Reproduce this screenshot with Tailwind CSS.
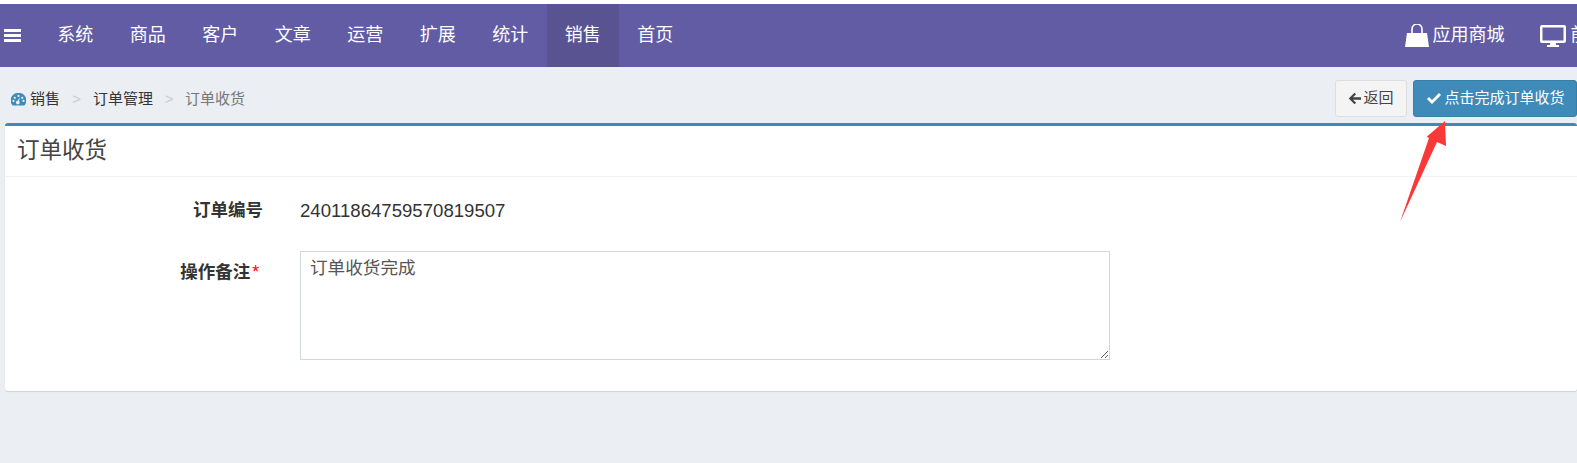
<!DOCTYPE html>
<html lang="zh-CN">
<head>
    <meta charset="UTF-8">
    <title>订单收货</title>
    <script src="https://cdn.jsdelivr.net/npm/@tailwindcss/browser@4"></script>
</head>
<body class="relative w-[1577px] h-[463px] overflow-hidden bg-[#ebeef3] pt-[4px] font-['Liberation_Sans','Noto_Sans_CJK_SC',sans-serif] text-[#333]">
    <div class="absolute top-0 left-0 w-full h-[4px] bg-white"></div>

    <!-- Top nav -->
    <nav class="flex items-center h-[63px] w-[1660px] bg-[#625ca5] text-white text-[18px]">
        <div class="w-[39px] pl-[4px]">
            <svg class="w-[17px] h-[14px]" viewBox="0 0 17 14" fill="#fff"><rect y="0" width="17" height="3"/><rect y="5" width="17" height="3"/><rect y="10" width="17" height="3"/></svg>
        </div>
        <a class="flex items-center justify-center w-[72.5px] h-full">系统</a>
        <a class="flex items-center justify-center w-[72.5px] h-full">商品</a>
        <a class="flex items-center justify-center w-[72.5px] h-full">客户</a>
        <a class="flex items-center justify-center w-[72.5px] h-full">文章</a>
        <a class="flex items-center justify-center w-[72.5px] h-full">运营</a>
        <a class="flex items-center justify-center w-[72.5px] h-full">扩展</a>
        <a class="flex items-center justify-center w-[72.5px] h-full">统计</a>
        <a class="flex items-center justify-center w-[72.5px] h-full bg-[#5a5392]">销售</a>
        <a class="flex items-center justify-center w-[72.5px] h-full">首页</a>
        <a class="flex items-center gap-[4px] ml-[713px] h-full">
            <svg class="w-[24px] h-[24px]" viewBox="0 0 24 24" fill="#fff"><path d="M2 9h20l2 14H0z"/><path d="M7 11V5a5 5 0 0 1 10 0v6" fill="none" stroke="#fff" stroke-width="1.6"/></svg>
            <span>应用商城</span>
        </a>
        <a class="flex items-center gap-[5px] ml-[35px] h-full">
            <svg class="w-[26px] h-[24px]" viewBox="0 0 26 24" fill="#fff"><path fill-rule="evenodd" d="M2 1h22a2 2 0 0 1 2 2v14a2 2 0 0 1-2 2H2a2 2 0 0 1-2-2V3a2 2 0 0 1 2-2zm.5 2.5v13h21v-13z"/><path d="M10 19h6v2h3v2H7v-2h3z"/></svg>
            <span>前台</span>
        </a>
    </nav>

    <!-- Breadcrumb and actions -->
    <div class="flex items-center justify-between h-[56px] pl-[11px]">
        <div class="flex items-center text-[15px] mt-[8px]">
            <svg class="w-[15px] h-[13px] mr-[4px]" viewBox="0 0 16 14" fill="#3e8ab8"><path fill-rule="evenodd" d="M8 0a8 8 0 0 1 6.9 12.7l-.6.8H1.7l-.6-.8A8 8 0 0 1 8 0zM8 2a1.2 1.2 0 1 0 0 2.4A1.2 1.2 0 0 0 8 2zM4 4a1.2 1.2 0 1 0 0 2.4A1.2 1.2 0 0 0 4 4zm8 0a1.2 1.2 0 1 0 0 2.4A1.2 1.2 0 0 0 12 4zM2.6 7.4a1.2 1.2 0 1 0 0 2.4 1.2 1.2 0 0 0 0-2.4zm10.8 0a1.2 1.2 0 1 0 0 2.4 1.2 1.2 0 0 0 0-2.4zM9.5 4.5 7 8.4a1.9 1.9 0 1 0 1.6.6z"/></svg>
            <span>销售</span>
            <span class="w-[33px] text-center text-[#ccc]">&gt;</span>
            <span>订单管理</span>
            <span class="w-[32px] text-center text-[#ccc]">&gt;</span>
            <span class="text-[#777]">订单收货</span>
        </div>
        <div class="flex items-center gap-[6px] mt-[6px]">
            <button class="flex items-center justify-center gap-[2px] w-[72px] h-[37px] rounded-[3px] border border-[#ddd] bg-[#f4f4f4] text-[15px] text-[#444]">
                <svg class="w-[13px] h-[13px]" viewBox="0 0 14 14" fill="#444"><path d="M7 .8 8.7 2.5 5.4 5.7H14v2.6H5.4l3.3 3.2L7 13.2.8 7z"/></svg>
                <span>返回</span>
            </button>
            <button class="flex items-center justify-center gap-[3px] w-[164px] h-[37px] pl-[2px] rounded-[3px] border border-[#367fa9] bg-[#3e8ab8] text-[15px] text-white">
                <svg class="w-[14px] h-[11px]" viewBox="0 0 14 11" fill="#fff"><path d="M5 11 0 6l2-2 3 3 7-7 2 2z"/></svg>
                <span>点击完成订单收货</span>
            </button>
        </div>
    </div>

    <!-- Panel -->
    <section class="ml-[5px] h-[268px] bg-white rounded-[3px] border-t-[3px] border-[#3e8ab8] shadow-[0_1px_1px_rgba(0,0,0,0.12)]">
        <h3 class="flex items-center h-[51px] pl-[12px] border-b border-[#f1f1f1] text-[22.5px] text-[#444]">订单收货</h3>
        <div class="flex items-center h-[66px] pt-[1px] text-[18.6px]">
            <label class="w-[258px] text-right font-bold text-[17.5px]">订单编号</label>
            <div class="ml-[37px]">24011864759570819507</div>
        </div>
        <div class="flex items-start mt-[8px]">
            <label class="w-[254px] text-right font-bold text-[17.5px] mt-[8px] mr-[41px]">操作备注<span class="ml-[2px] text-[#f00] font-normal">*</span></label>
            <textarea class="w-[810px] h-[109px] border border-[#d2d6de] pl-[9px] pr-[10px] py-[4px] text-[17.6px] leading-[24px] text-[#555]">订单收货完成</textarea>
        </div>
    </section>

    <!-- Red annotation arrow -->
    <svg class="absolute left-[1395px] top-[118px] w-[60px] h-[106px]" viewBox="0 0 60 106"><path d="M50 3 51 28 42 24 5 104 34 20 31.7 18.7z" fill="#fb3838"/></svg>
</body>
</html>
